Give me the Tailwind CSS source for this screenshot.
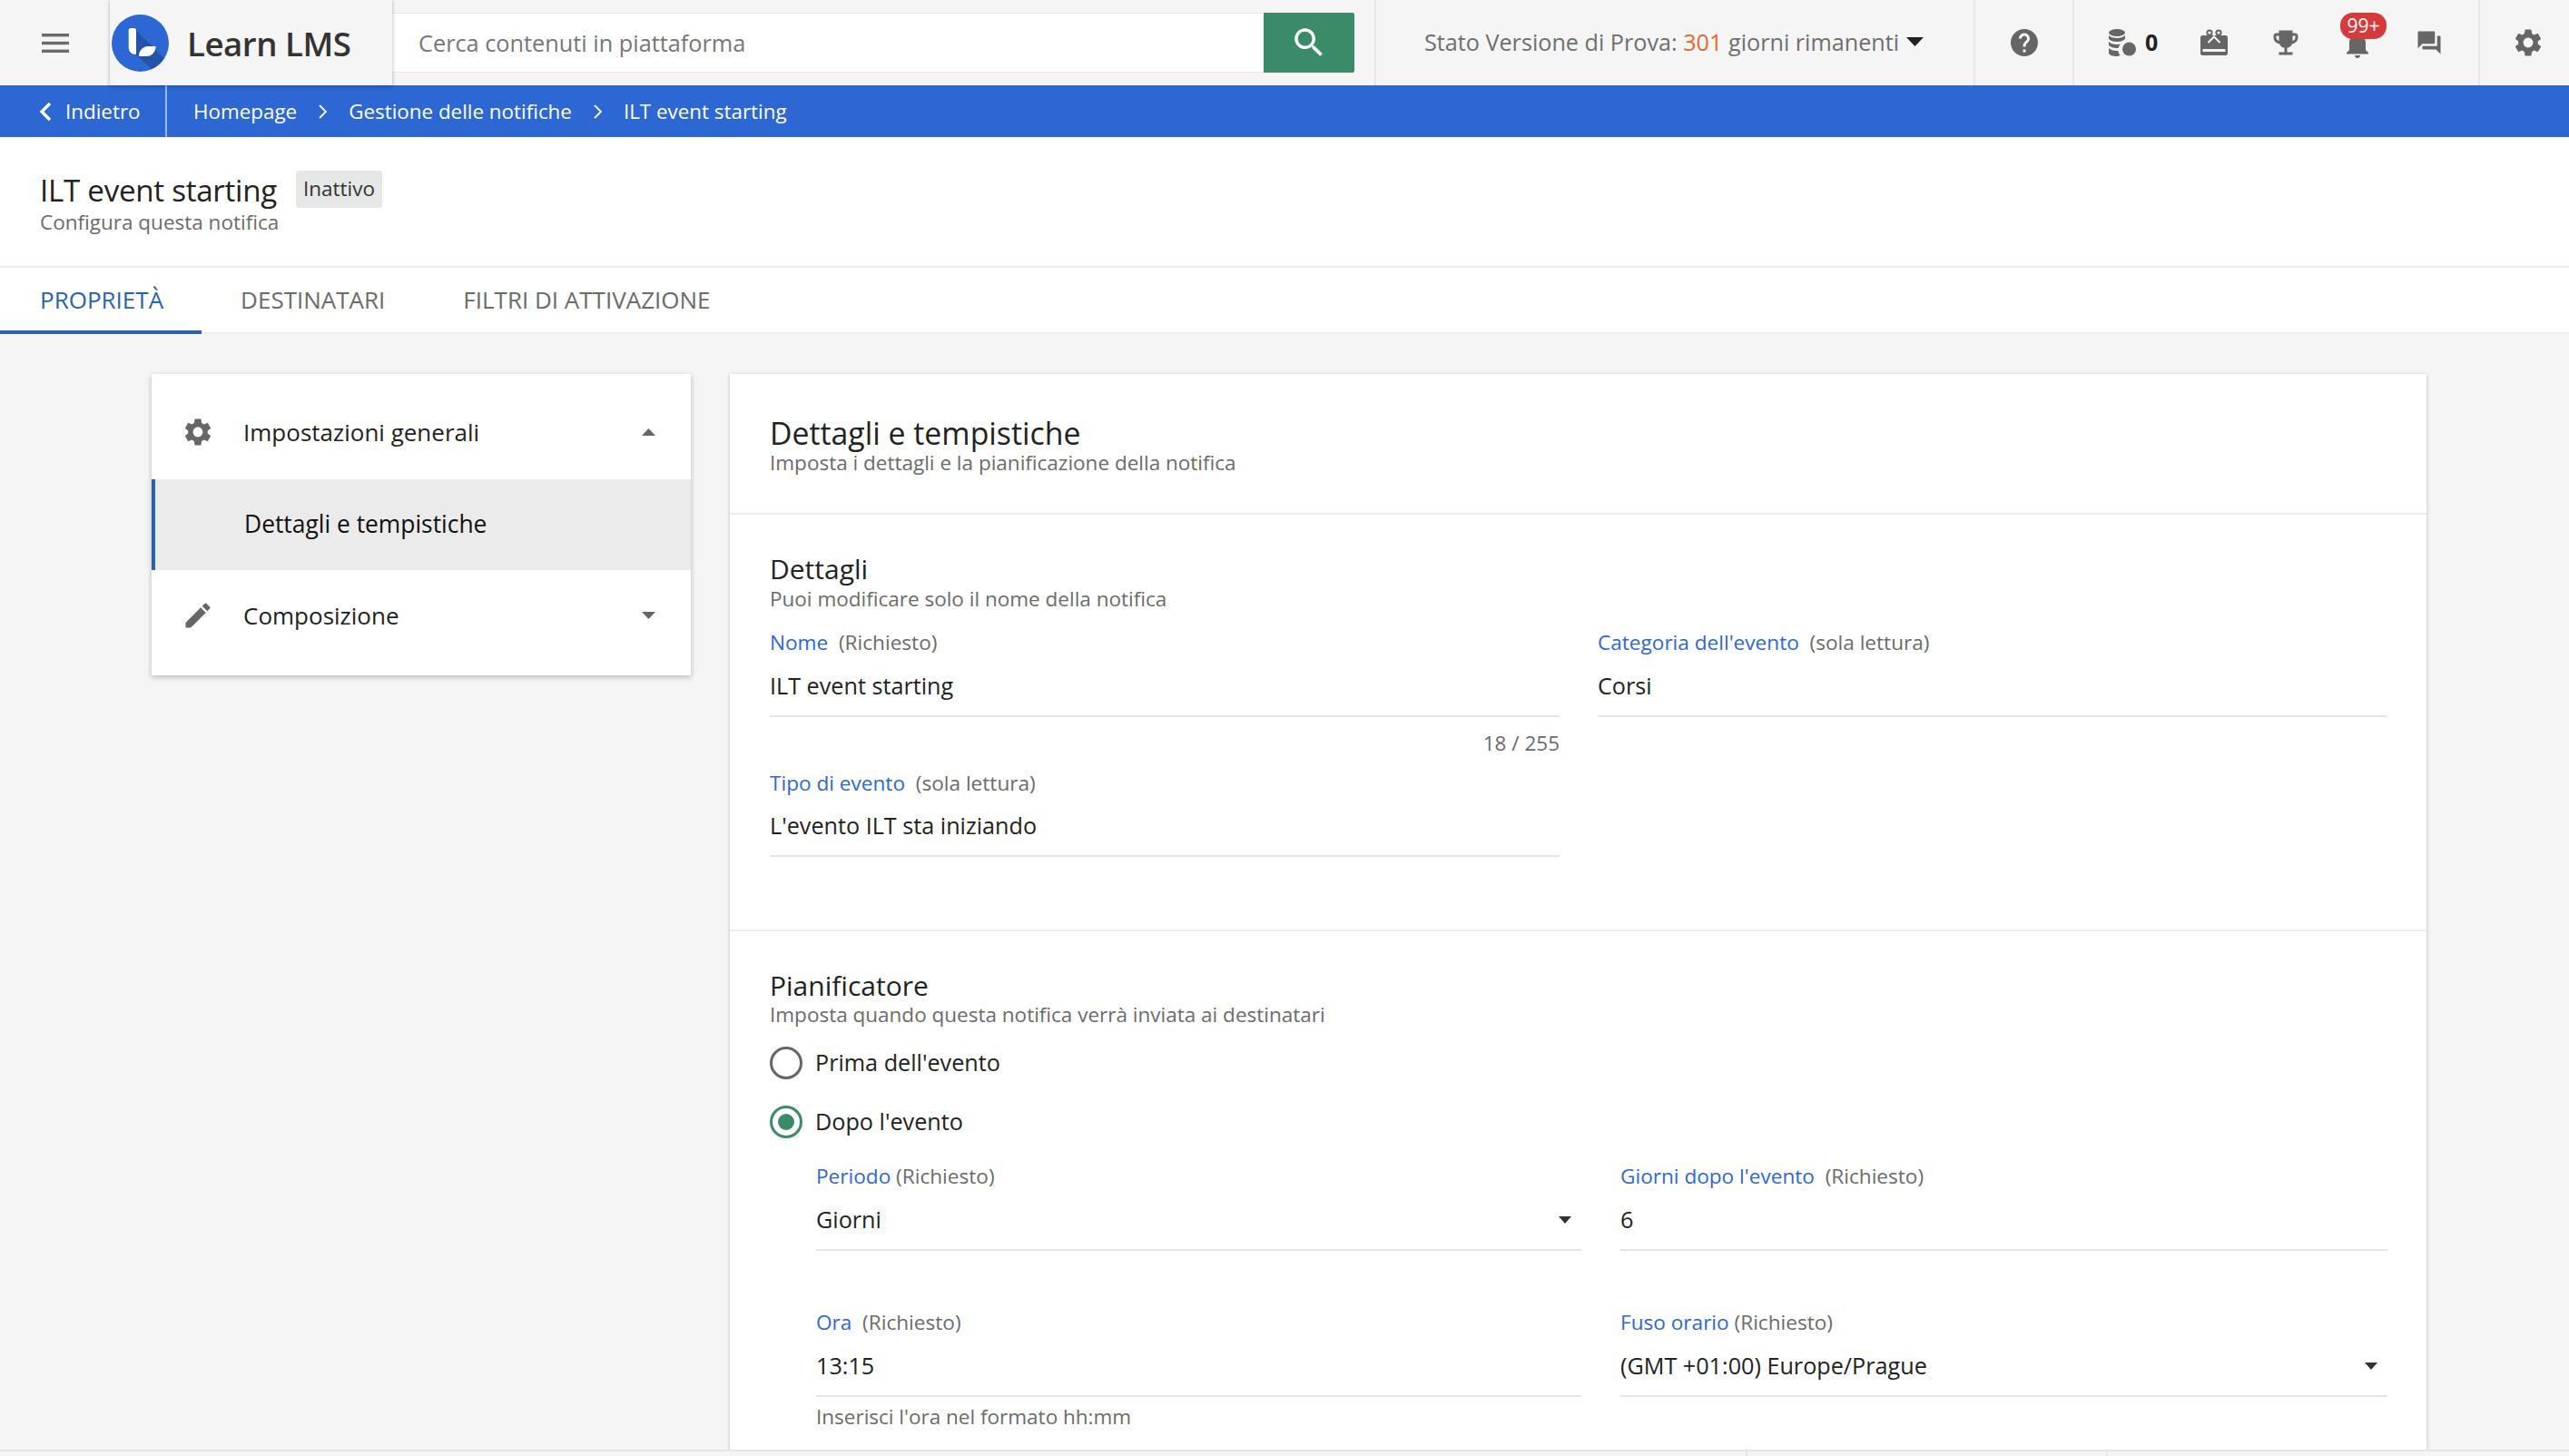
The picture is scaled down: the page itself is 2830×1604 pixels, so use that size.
<!DOCTYPE html>
<html lang="it">
<head>
    <meta charset="UTF-8">
    <title>ILT event starting - Learn LMS</title>
    <script src="https://cdn.jsdelivr.net/npm/@tailwindcss/browser@4"></script>
</head>
<body class="relative h-screen overflow-hidden bg-[#f5f5f5] font-['Open_Sans',sans-serif] text-[25.200px] text-[#222]">

    <!-- top bar -->
    <header class="flex h-[94px] bg-[#f5f5f5]">
        <div class="flex w-[121px] items-center justify-center pl-[1px]">
            <svg class="h-[21px] w-[30px]" viewBox="0 0 30 21" fill="#6b6b6b"><rect width="30" height="3.400"/><rect y="8.800" width="30" height="3.400"/><rect y="17.600" width="30" height="3.400"/></svg>
        </div>
        <div class="relative z-10 flex w-[311px] items-center gap-[20px] pl-[2px] shadow-[0_1px_4px_rgba(0,0,0,0.3)]">
            <svg class="h-[63px] w-[63px]" viewBox="0 0 63 63">
                <circle cx="31.500" cy="31.500" r="31.500" fill="#2d67d3"/>
                <path d="M27 18 L58 48 A31.500 31.500 0 0 1 44 60 L20 38 Z" fill="#2453a8"/>
                <path d="M18.700 17.500a2.500 2.500 0 0 1 2.500-2.500h3.300a2.500 2.500 0 0 1 2.500 2.500V44c-5 0-8.300-3-8.300-8z" fill="#fff"/>
                <path d="M30 46c0-6 4-11 10-11h8.500c0 6-4 11-10 11z" fill="#fff"/>
            </svg>
            <span class="pt-[2px] text-[36.700px] leading-none font-semibold tracking-[-0.5px] text-[#333]">Learn LMS</span>
        </div>
        <div class="flex w-[1082px] py-[14px] pr-[22px]">
            <div class="flex flex-1 items-center border-y border-[#e8e8e8] bg-white pt-[2px] pl-[29px] text-[25.300px] text-[#777]">Cerca contenuti in piattaforma</div>
            <div class="flex w-[100px] items-center justify-center rounded-r-[2px] bg-[#3c8b68]">
                <svg class="h-[42px] w-[42px]" viewBox="0 0 24 24" fill="#fff"><path d="M15.500 14h-.79l-.28-.27C15.410 12.590 16 11.110 16 9.500 16 5.910 13.090 3 9.500 3S3 5.910 3 9.500 5.910 16 9.500 16c1.610 0 3.090-.59 4.230-1.570l.27.28v.79l5 4.990L20.490 19l-4.990-5zm-6 0C7.010 14 5 11.990 5 9.500S7.010 5 9.500 5 14 7.010 14 9.500 11.990 14 9.500 14z"/></svg>
            </div>
        </div>
        <div class="flex w-[660px] items-center border-l-2 border-[#e8e8e8] pl-[53px] text-[#6f6f6f]">
            <span class="whitespace-nowrap">Stato Versione di Prova: <span class="text-[#e9652c]">301</span> giorni rimanenti</span>
            <svg class="mb-[3px] ml-[8px] h-[10px] w-[19px]" viewBox="0 0 19 10" fill="#222"><polygon points="0,0 19,0 9.500,10"/></svg>
        </div>
        <div class="flex w-[109px] items-center justify-center border-l-2 border-[#e8e8e8]">
            <svg class="h-[36px] w-[36px]" viewBox="0 0 24 24" fill="#666"><path d="M12 2C6.480 2 2 6.480 2 12s4.480 10 10 10 10-4.480 10-10S17.520 2 12 2zm1 17h-2v-2h2v2zm2.070-7.750l-.9.920C13.450 12.900 13 13.500 13 15h-2v-.5c0-1.100.45-2.100 1.170-2.830l1.240-1.260c.37-.36.59-.86.59-1.410 0-1.100-.9-2-2-2s-2 .9-2 2H8c0-2.210 1.790-4 4-4s4 1.790 4 4c0 .88-.36 1.680-.93 2.250z"/></svg>
        </div>
        <div class="relative flex w-[447px] items-center border-l-2 border-[#e8e8e8] pl-[38px]">
            <svg class="h-[30px] w-[30px]" viewBox="0 0 30 30" fill="#666">
                <ellipse cx="9" cy="4" rx="9" ry="4"/>
                <path d="M0 7c2 2 5 3 9 3s7-1 9-3v4c-2 2-5 3-9 3s-7-1-9-3z"/>
                <path d="M0 14c2 2 5 3 9 3 1.500 0 3-.2 4-.5-1.500 1.500-2.200 3-2.500 4.500H9c-4 0-7-1-9-3z"/>
                <path d="M0 21c2 2 5 3 9 3h1.500c.2 2 .8 3.500 2 5-1 .5-2.500 1-3.500 1-4 0-9-1-9-4z"/>
                <circle cx="22.500" cy="22" r="7.500"/>
            </svg>
            <span class="ml-[10px] w-[16px] text-[25px] font-bold text-[#222]">0</span>
            <!-- gift card, filled body with light ribbon and stripe -->
            <svg class="mt-[-1px] ml-[45px] h-[30px] w-[30px]" viewBox="0 0 30 30">
                <circle cx="10" cy="4" r="2.600" fill="none" stroke="#666" stroke-width="2"/>
                <circle cx="20" cy="4" r="2.600" fill="none" stroke="#666" stroke-width="2"/>
                <rect y="7" width="30" height="22" rx="2.500" fill="#666"/>
                <path d="M8.500 15 15 8.500 21.500 15" fill="none" stroke="#f5f5f5" stroke-width="2"/>
                <rect x="2.500" y="22" width="25" height="3" fill="#f5f5f5"/>
            </svg>
            <svg class="ml-[46px] h-[36px] w-[36px]" viewBox="0 0 24 24" fill="#666"><path d="M19 5h-2V3H7v2H5c-1.100 0-2 .9-2 2v1c0 2.550 1.920 4.630 4.390 4.940.63 1.500 1.980 2.630 3.610 2.960V19H7v2h10v-2h-4v-3.100c1.630-.33 2.980-1.460 3.610-2.960C19.080 12.630 21 10.550 21 8V7c0-1.100-.9-2-2-2zM5 8V7h2v3.820C5.840 10.400 5 9.300 5 8zm14 0c0 1.300-.84 2.400-2 2.820V7h2v1z"/></svg>
            <div class="relative ml-[43px] h-[36px] w-[36px]">
                <svg class="mt-[2px] h-[36px] w-[36px]" viewBox="0 0 24 24" fill="#666"><path d="M12 22c1.100 0 2-.9 2-2h-4c0 1.100.89 2 2 2zm6-6v-5c0-3.070-1.640-5.640-4.500-6.320V4c0-.83-.67-1.500-1.500-1.500s-1.500.67-1.500 1.500v.68C7.630 5.360 6 7.920 6 11v5l-2 2v1h16v-1l-2-2z"/></svg>
                <span class="absolute top-[-15px] left-[-1px] flex h-[29px] w-[51px] items-center justify-center rounded-[14px] bg-[#d43b3d] text-[21px] text-white">99+</span>
            </div>
            <svg class="ml-[46px] h-[30px] w-[30px]" viewBox="0 0 24 24" fill="#666"><path d="M21 6h-2v9H6v2c0 .55.45 1 1 1h11l4 4V7c0-.55-.45-1-1-1zm-4 6V3c0-.55-.45-1-1-1H3c-.55 0-1 .45-1 1v14l4-4h10c.55 0 1-.45 1-1z"/></svg>
        </div>
        <div class="flex w-[100px] items-center justify-center border-l-2 border-[#e8e8e8] pl-[8px]">
            <svg class="h-[36px] w-[36px]" viewBox="0 0 24 24" fill="#666"><path d="M19.140 12.940c.04-.3.06-.61.06-.94 0-.32-.02-.64-.07-.94l2.030-1.580c.18-.14.23-.41.12-.61l-1.920-3.320c-.12-.22-.37-.29-.59-.22l-2.390.96c-.5-.38-1.030-.7-1.620-.94l-.36-2.540c-.04-.24-.24-.41-.48-.41h-3.840c-.24 0-.43.17-.47.41l-.36 2.540c-.59.24-1.130.57-1.620.94l-2.390-.96c-.22-.08-.47 0-.59.22L2.740 8.870c-.12.21-.08.47.12.61l2.030 1.580c-.05.3-.09.63-.09.94s.02.64.07.94l-2.030 1.580c-.18.14-.23.41-.12.61l1.920 3.320c.12.22.37.29.59.22l2.390-.96c.5.38 1.030.7 1.620.94l.36 2.540c.05.24.24.41.48.41h3.840c.24 0 .44-.17.47-.41l.36-2.540c.59-.24 1.130-.56 1.620-.94l2.390.96c.22.08.47 0 .59-.22l1.920-3.320c.12-.22.07-.47-.12-.61l-2.010-1.580zM12 15.600c-1.980 0-3.600-1.620-3.600-3.600s1.620-3.600 3.600-3.600 3.600 1.620 3.600 3.600-1.620 3.600-3.600 3.600z"/></svg>
        </div>
    </header>

    <!-- breadcrumb -->
    <nav class="flex h-[57px] items-center bg-[#2d67d3] text-[22.400px] text-white">
        <div class="flex h-full w-[184px] items-center border-r-2 border-[#9db8ea] pl-[43px]">
            <svg class="h-[22px] w-[14px]" viewBox="0 0 14 22" fill="none" stroke="#fff" stroke-width="3.400"><path d="M12 2 3 11l9 9"/></svg>
            <span class="ml-[15px]">Indietro</span>
        </div>
        <span class="ml-[29px]">Homepage</span>
        <svg class="mx-[24px] h-[16px] w-[9px]" viewBox="0 0 9 16" fill="none" stroke="#fff" stroke-width="1.800"><path d="m1 1 7 7-7 7"/></svg>
        <span>Gestione delle notifiche</span>
        <svg class="mx-[24px] h-[16px] w-[9px]" viewBox="0 0 9 16" fill="none" stroke="#fff" stroke-width="1.800"><path d="m1 1 7 7-7 7"/></svg>
        <span>ILT event starting</span>
    </nav>

    <!-- page title -->
    <section class="h-[144px] border-b-2 border-[#ececec] bg-white pt-[36px] pl-[44px]">
        <div class="flex items-center">
            <h1 class="text-[33.200px] leading-[46px] font-medium tracking-[-0.3px] text-[#222]">ILT event starting</h1>
            <span class="mb-[4px] ml-[21px] flex h-[41px] w-[95px] items-center justify-center rounded-[3px] bg-[#e6e7e7] text-[22.500px] text-[#333]">Inattivo</span>
        </div>
        <p class="mt-[-3px] text-[22.500px] leading-[30px] text-[#6b6b6b]">Configura questa notifica</p>
    </section>

    <!-- tabs -->
    <div class="flex h-[73px] border-b-2 border-[#ececec] bg-white text-[26px]">
        <div class="flex h-[73px] items-center border-b-[4px] border-[#2b63ab] pt-[1px] pr-[42px] pl-[44px] text-[#2b63ab]">PROPRIETÀ</div>
        <div class="flex items-center px-[43px] text-[#6b6b6b]">DESTINATARI</div>
        <div class="flex items-center px-[43px] text-[#6b6b6b]">FILTRI DI ATTIVAZIONE</div>
    </div>

    <main class="flex gap-[43px] pt-[44px] pl-[167px]">
        <!-- sidebar -->
        <aside class="h-[332px] w-[594px] bg-white text-[26px] shadow-[0_2px_6px_rgba(0,0,0,0.25)]">
            <div class="flex h-[116px] items-center pt-[12px] pr-[39px] pl-[33px] font-medium">
                <svg class="h-[36px] w-[36px]" viewBox="0 0 24 24" fill="#666"><path d="M19.140 12.940c.04-.3.06-.61.06-.94 0-.32-.02-.64-.07-.94l2.030-1.580c.18-.14.23-.41.12-.61l-1.920-3.320c-.12-.22-.37-.29-.59-.22l-2.390.96c-.5-.38-1.030-.7-1.620-.94l-.36-2.540c-.04-.24-.24-.41-.48-.41h-3.840c-.24 0-.43.17-.47.41l-.36 2.540c-.59.24-1.130.57-1.620.94l-2.390-.96c-.22-.08-.47 0-.59.22L2.740 8.870c-.12.21-.08.47.12.61l2.030 1.580c-.05.3-.09.63-.09.94s.02.64.07.94l-2.030 1.580c-.18.14-.23.41-.12.61l1.920 3.320c.12.22.37.29.59.22l2.390-.96c.5.38 1.030.7 1.620.94l.36 2.540c.05.24.24.41.48.41h3.840c.24 0 .44-.17.47-.41l.36-2.540c.59-.24 1.130-.56 1.620-.94l2.390.96c.22.08.47 0 .59-.22l1.920-3.320c.12-.22.07-.47-.12-.61l-2.010-1.580zM12 15.600c-1.980 0-3.600-1.620-3.600-3.600s1.620-3.600 3.600-3.600 3.600 1.620 3.600 3.600-1.620 3.600-3.600 3.600z"/></svg>
                <span class="ml-[32px] flex-1">Impostazioni generali</span>
                <svg class="h-[8px] w-[15px]" viewBox="0 0 15 8" fill="#666"><polygon points="7.500,0 15,8 0,8"/></svg>
            </div>
            <div class="flex h-[100px] items-center border-l-[4px] border-[#2b63ab] bg-[#ebebeb] pb-[1px] pl-[98px] text-[26.400px] font-medium text-[#111]">Dettagli e tempistiche</div>
            <div class="flex h-[116px] items-center pr-[39px] pb-[16px] pl-[33px] font-medium">
                <svg class="h-[36px] w-[36px]" viewBox="0 0 24 24" fill="#666"><path d="M3 17.250V21h3.750L17.810 9.940l-3.750-3.750L3 17.250zM20.710 7.040c.39-.39.39-1.020 0-1.410l-2.340-2.340c-.39-.39-1.020-.39-1.410 0l-1.830 1.830 3.750 3.750 1.830-1.830z"/></svg>
                <span class="ml-[32px] flex-1">Composizione</span>
                <svg class="h-[8px] w-[15px]" viewBox="0 0 15 8" fill="#666"><polygon points="0,0 15,0 7.500,8"/></svg>
            </div>
        </aside>

        <!-- form card -->
        <div class="h-[1190px] w-[1869px] bg-white shadow-[0_1px_4px_rgba(0,0,0,0.25)]">
            <div class="h-[155px] border-b-2 border-[#ececec] pt-[47px] pl-[44px]">
                <h2 class="text-[33.800px] leading-[36px] font-medium">Dettagli e tempistiche</h2>
                <p class="text-[22.500px] leading-[30px] text-[#6b6b6b]">Imposta i dettagli e la pianificazione della notifica</p>
            </div>

            <div class="h-[459px] border-b-2 border-[#ececec] pt-[42px] pr-[43px] pl-[44px]">
                <h3 class="text-[30px] leading-[36px] font-medium">Dettagli</h3>
                <p class="text-[22.500px] leading-[30px] text-[#6b6b6b]">Puoi modificare solo il nome della notifica</p>
                <div class="mt-[18px] grid grid-cols-[870px_870px] gap-x-[42px]">
                    <div>
                        <div class="h-[30px] text-[22.600px] leading-[30px] text-[#6b6b6b]"><span class="text-[#2d67d3]">Nome</span> &nbsp;(Richiesto)</div>
                        <div class="flex h-[67px] items-center border-b-2 border-[#e5e5e5]">ILT event starting</div>
                        <div class="flex h-[58px] items-center justify-end text-[22.500px] text-[#6b6b6b]">18 / 255</div>
                        <div class="h-[30px] text-[22.600px] leading-[30px] text-[#6b6b6b]"><span class="text-[#2d67d3]">Tipo di evento</span> &nbsp;(sola lettura)</div>
                        <div class="flex h-[66px] items-center border-b-2 border-[#e5e5e5]">L'evento ILT sta iniziando</div>
                    </div>
                    <div>
                        <div class="h-[30px] text-[22.600px] leading-[30px] text-[#6b6b6b]"><span class="text-[#2d67d3]">Categoria dell'evento</span> &nbsp;(sola lettura)</div>
                        <div class="flex h-[67px] items-center border-b-2 border-[#e5e5e5]">Corsi</div>
                    </div>
                </div>
            </div>

            <div class="pt-[42px] pl-[44px]">
                <h3 class="text-[30px] leading-[36px] font-medium">Pianificatore</h3>
                <p class="mt-[-1px] text-[22.500px] leading-[30px] text-[#6b6b6b]">Imposta quando questa notifica verrà inviata ai destinatari</p>
                <div class="mt-[20px] flex h-[36px] items-center gap-[14px]">
                    <span class="h-[36px] w-[36px] rounded-full border-[3.500px] border-[#666]"></span>
                    <span>Prima dell'evento</span>
                </div>
                <div class="mt-[29px] flex h-[36px] items-center gap-[14px]">
                    <span class="flex h-[36px] w-[36px] items-center justify-center rounded-full border-[3.500px] border-[#3c8b68]"><span class="h-[18px] w-[18px] rounded-full bg-[#3c8b68]"></span></span>
                    <span>Dopo l'evento</span>
                </div>
                <div class="mt-[27px] ml-[51px] grid grid-cols-[843px_845px] gap-x-[43px]">
                    <div>
                        <div class="h-[30px] text-[22.600px] leading-[30px] text-[#6b6b6b]"><span class="text-[#2d67d3]">Periodo</span> (Richiesto)</div>
                        <div class="flex h-[67px] items-center justify-between border-b-2 border-[#e5e5e5] pr-[11px]">
                            <span>Giorni</span>
                            <svg class="h-[8px] w-[14px]" viewBox="0 0 14 8" fill="#333"><polygon points="0,0 14,0 7,8"/></svg>
                        </div>
                    </div>
                    <div>
                        <div class="h-[30px] text-[22.600px] leading-[30px] text-[#6b6b6b]"><span class="text-[#2d67d3]">Giorni dopo l'evento</span> &nbsp;(Richiesto)</div>
                        <div class="flex h-[67px] items-center border-b-2 border-[#e5e5e5]">6</div>
                    </div>
                    <div class="mt-[64px]">
                        <div class="h-[30px] text-[22.600px] leading-[30px] text-[#6b6b6b]"><span class="text-[#2d67d3]">Ora</span> &nbsp;(Richiesto)</div>
                        <div class="flex h-[67px] items-center border-b-2 border-[#e5e5e5]">13:15</div>
                        <div class="mt-[7px] text-[22.500px] leading-[30px] text-[#6b6b6b]">Inserisci l'ora nel formato hh:mm</div>
                    </div>
                    <div class="mt-[64px]">
                        <div class="h-[30px] text-[22.600px] leading-[30px] text-[#6b6b6b]"><span class="text-[#2d67d3]">Fuso orario</span> (Richiesto)</div>
                        <div class="flex h-[67px] items-center justify-between border-b-2 border-[#e5e5e5] pr-[11px]">
                            <span>(GMT +01:00) Europe/Prague</span>
                            <svg class="h-[8px] w-[14px]" viewBox="0 0 14 8" fill="#333"><polygon points="0,0 14,0 7,8"/></svg>
                        </div>
                    </div>
                </div>
            </div>
        </div>
    </main>

    <!-- footer sliver at the very bottom -->
    <footer class="absolute right-0 bottom-0 left-0 flex h-[7px] border-t-2 border-[#e5e5e5] bg-[#f5f5f5]">
        <div class="w-[1925px] border-r-2 border-[#e5e5e5]"></div>
        <div class="w-[397px] border-r-2 border-[#e5e5e5]"></div>
    </footer>
</body>
</html>
